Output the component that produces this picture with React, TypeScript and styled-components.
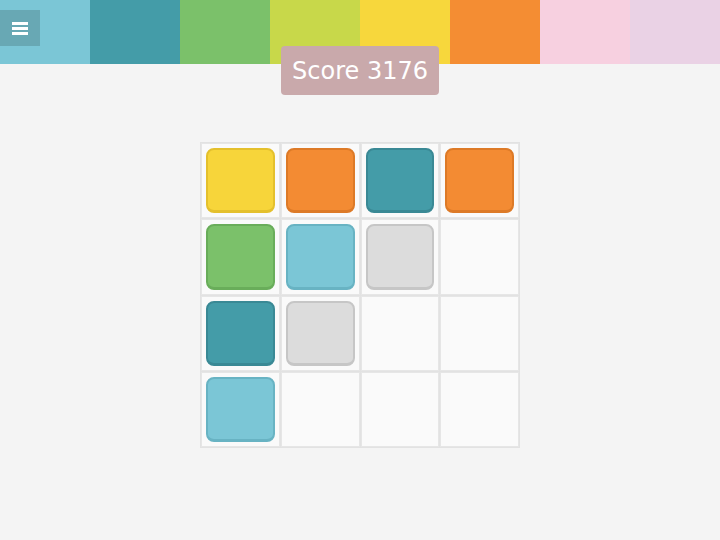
import React from 'react'
import styled, { createGlobalStyle } from 'styled-components'

const GlobalStyle = createGlobalStyle`
  html, body {
    margin: 0;
    padding: 0;
    background: #f4f4f4;
    font-family: "DejaVu Sans", Verdana, sans-serif;
  }
`

const stripes = ['#7bc6d6', '#449ca8', '#7bc16a', '#c8d84a', '#f7d73c', '#f48d33', '#f7d0e0', '#ead2e5']

const tileColors: Record<string, { fill: string; edge: string }> = {
  yellow: { fill: '#f7d53a', edge: '#e4c02c' },
  orange: { fill: '#f38b33', edge: '#dd7a27' },
  teal: { fill: '#449ca8', edge: '#3a8995' },
  green: { fill: '#7bc16a', edge: '#69ad5a' },
  blue: { fill: '#7bc6d6', edge: '#68b3c3' },
  gray: { fill: '#dcdcdc', edge: '#c6c6c6' },
}

const board: (string | null)[][] = [
  ['yellow', 'orange', 'teal', 'orange'],
  ['green', 'blue', 'gray', null],
  ['teal', 'gray', null, null],
  ['blue', null, null, null],
]

const Page = styled.div`
  width: 720px;
  height: 540px;
  display: flex;
  flex-direction: column;
  align-items: center;
  position: relative;
`

const TopBar = styled.div`
  width: 100%;
  height: 64px;
  display: flex;
`

const Stripe = styled.div<{ color: string }>`
  flex: 1;
  background: ${({ color }) => color};
`

const MenuButton = styled.button`
  position: absolute;
  left: 0;
  top: 10px;
  width: 40px;
  height: 36px;
  border: none;
  padding: 0;
  background: #68a8b4;
  display: flex;
  align-items: center;
  justify-content: center;
`

const Score = styled.div`
  position: relative;
  margin-top: -18px;
  height: 49px;
  padding: 0 10px;
  min-width: 158px;
  box-sizing: border-box;
  border-radius: 4px;
  background: #c9a9ab;
  color: #ffffff;
  font-size: 24px;
  display: flex;
  align-items: center;
  justify-content: center;
`

const Grid = styled.div`
  margin-top: 47px;
  width: 320px;
  height: 306px;
  box-sizing: border-box;
  padding: 1px;
  gap: 1px;
  background: #e2e2e2;
  display: grid;
  grid-template-columns: repeat(4, 1fr);
  grid-template-rows: repeat(4, 1fr);
`

const Cell = styled.div`
  border: 1px solid #e6e6e6;
  background: #fafafa;
  padding: 4px;
  display: flex;
`

const Tile = styled.div<{ fill: string; edge: string }>`
  flex: 1;
  box-sizing: border-box;
  border-radius: 8px;
  background: ${({ fill }) => fill};
  border: 2px solid ${({ edge }) => edge};
  border-bottom-width: 3px;
`

const MenuIcon = () => (
  <svg width="16" height="14" viewBox="0 0 16 14">
    <rect x="0" y="1" width="16" height="3" fill="#ffffff" />
    <rect x="0" y="6" width="16" height="3" fill="#ffffff" />
    <rect x="0" y="11" width="16" height="3" fill="#ffffff" />
  </svg>
)

export default function App() {
  return (
    <Page>
      <GlobalStyle />
      <TopBar>
        {stripes.map((c) => (
          <Stripe key={c} color={c} />
        ))}
      </TopBar>
      <MenuButton aria-label="menu">
        <MenuIcon />
      </MenuButton>
      <Score>Score 3176</Score>
      <Grid>
        {board.flat().map((t, i) => (
          <Cell key={i}>{t && <Tile fill={tileColors[t].fill} edge={tileColors[t].edge} />}</Cell>
        ))}
      </Grid>
    </Page>
  )
}
